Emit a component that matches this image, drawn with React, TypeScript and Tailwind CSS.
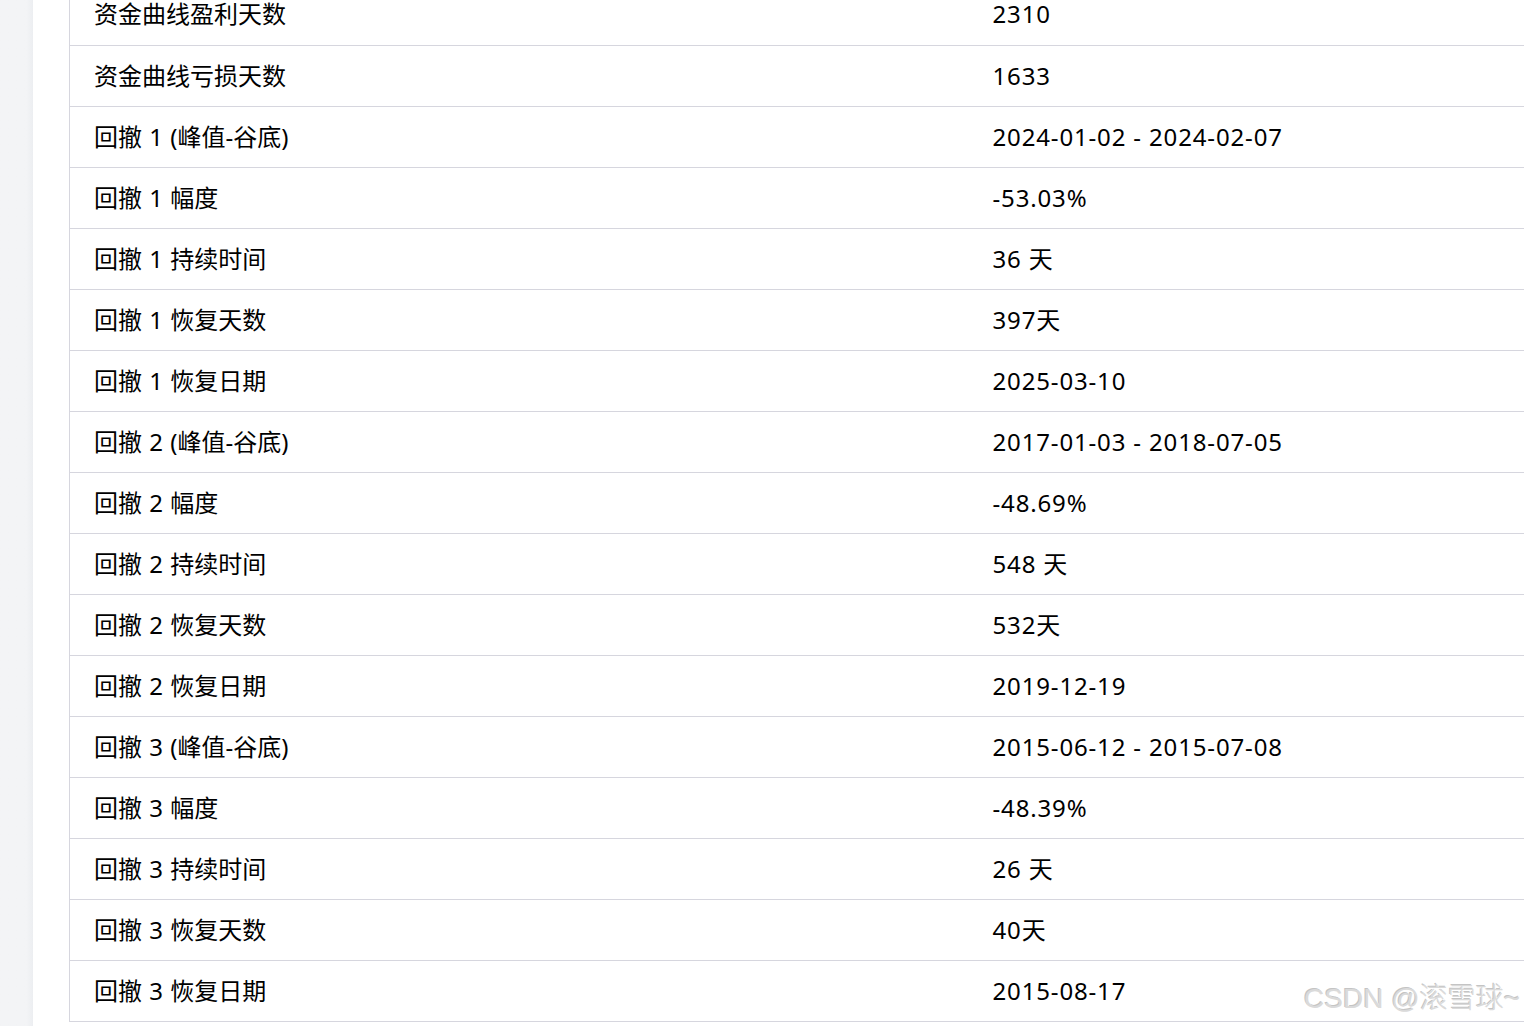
const rows: [string, string][] = [
  ["资金曲线盈利天数", "2310"],
  ["资金曲线亏损天数", "1633"],
  ["回撤 1 (峰值-谷底)", "2024-01-02 - 2024-02-07"],
  ["回撤 1 幅度", "-53.03%"],
  ["回撤 1 持续时间", "36 天"],
  ["回撤 1 恢复天数", "397天"],
  ["回撤 1 恢复日期", "2025-03-10"],
  ["回撤 2 (峰值-谷底)", "2017-01-03 - 2018-07-05"],
  ["回撤 2 幅度", "-48.69%"],
  ["回撤 2 持续时间", "548 天"],
  ["回撤 2 恢复天数", "532天"],
  ["回撤 2 恢复日期", "2019-12-19"],
  ["回撤 3 (峰值-谷底)", "2015-06-12 - 2015-07-08"],
  ["回撤 3 幅度", "-48.39%"],
  ["回撤 3 持续时间", "26 天"],
  ["回撤 3 恢复天数", "40天"],
  ["回撤 3 恢复日期", "2015-08-17"],
];

const App = () => {
  return (
    <div
      className="relative flex h-[1026px] w-[1524px] overflow-hidden bg-white"
      style={{ fontFamily: '"Noto Sans", "Noto Sans CJK SC", sans-serif' }}
    >
      {/* side strip */}
      <div className="h-full w-[33px] shrink-0 bg-gradient-to-r from-[#f3f4f6] from-80% to-[#eceef1]" />

      {/* table area */}
      <div className="ml-[36px] flex-1 overflow-hidden">
        <table className="-mt-[16px] w-[1700px] border-collapse border-l border-[#d6d6de] text-[24px] text-black">
          <tbody>
            {rows.map(([k, v]) => (
              <tr key={k} className="border-b border-[#d6d6de]">
                <td className="h-[61px] w-[899px] px-6 align-middle leading-none [word-spacing:1px]">{k}</td>
                <td className="h-[61px] px-6 align-middle leading-none tracking-[0.85px]">{v}</td>
              </tr>
            ))}
          </tbody>
        </table>
      </div>

      {/* watermark */}
      <div
        className="absolute bottom-[6px] right-[4px] text-[28px] font-light text-[#dadada] [text-shadow:1px_1px_0_#ffffff,-1px_-1px_0_#c4c4c4]"
        style={{ fontFamily: '"Liberation Sans", "Noto Sans CJK SC", sans-serif' }}
      >
        CSDN @滚雪球~
      </div>
    </div>
  );
};

export default App;
